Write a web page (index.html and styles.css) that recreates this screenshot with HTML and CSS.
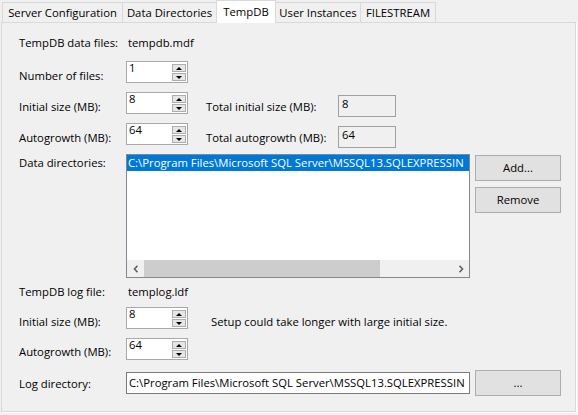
FILE: index.html
```html
<!DOCTYPE html>
<html>
<head>
<meta charset="utf-8">
<link rel="stylesheet" href="styles.css">
</head>
<body>
<div class="tabs">
  <div class="tab t1">Server Configuration</div>
  <div class="tab t2">Data Directories</div>
  <div class="tab t3 active">TempDB</div>
  <div class="tab t4">User Instances</div>
  <div class="tab t5">FILESTREAM</div>
</div>
<div class="panel">
  <div class="info first"><span class="lbl">TempDB data files:</span><span class="value">tempdb.mdf</span></div>

  <div class="row r2">
    <span class="lbl pad">Number of files:</span>
    <div class="spin"><span class="val">1</span><div class="btns"><span class="up"></span><span class="dn"></span></div></div>
  </div>

  <div class="row r3">
    <span class="lbl pad">Initial size (MB):</span>
    <div class="spin"><span class="val">8</span><div class="btns"><span class="up"></span><span class="dn"></span></div></div>
    <span class="lbl2 pad">Total initial size (MB):</span>
    <div class="total">8</div>
  </div>

  <div class="row r3">
    <span class="lbl pad">Autogrowth (MB):</span>
    <div class="spin"><span class="val">64</span><div class="btns"><span class="up"></span><span class="dn"></span></div></div>
    <span class="lbl2 pad">Total autogrowth (MB):</span>
    <div class="total">64</div>
  </div>

  <div class="listrow">
    <span class="lbl pad1">Data directories:</span>
    <div class="list">
      <div class="items">
        <div class="sel">C:\Program Files\Microsoft SQL Server\MSSQL13.SQLEXPRESSIN</div>
      </div>
      <div class="hscroll">
        <div class="arrow"><svg width="6" height="8" viewBox="0 0 6 8"><polyline points="4.5,0.8 1.5,4 4.5,7.2" fill="none" stroke="#606060" stroke-width="1.6"/></svg></div>
        <div class="thumb"></div>
        <div class="track"></div>
        <div class="arrow"><svg width="6" height="8" viewBox="0 0 6 8"><polyline points="1.5,0.8 4.5,4 1.5,7.2" fill="none" stroke="#606060" stroke-width="1.6"/></svg></div>
      </div>
    </div>
    <div class="side">
      <div class="btn add">Add...</div>
      <div class="btn remove">Remove</div>
    </div>
  </div>

  <div class="info log"><span class="lbl">TempDB log file:</span><span class="value">templog.ldf</span></div>

  <div class="row r7">
    <span class="lbl pad">Initial size (MB):</span>
    <div class="spin"><span class="val">8</span><div class="btns"><span class="up"></span><span class="dn"></span></div></div>
    <span class="note pad">Setup could take longer with large initial size.</span>
  </div>

  <div class="row r3">
    <span class="lbl pad6">Autogrowth (MB):</span>
    <div class="spin"><span class="val">64</span><div class="btns"><span class="up"></span><span class="dn"></span></div></div>
  </div>

  <div class="row r9">
    <span class="lbl pad6">Log directory:</span>
    <div class="input">C:\Program Files\Microsoft SQL Server\MSSQL13.SQLEXPRESSIN</div>
    <div class="btn browse">...</div>
  </div>
</div>
</body>
</html>
```

FILE: styles.css
```css
* { box-sizing: border-box; }

body {
  margin: 0;
  width: 578px;
  height: 415px;
  overflow: hidden;
  background: #f0f0f0;
  font-family: "Open Sans", "Noto Sans", sans-serif;
  font-size: 11.3px;
  color: #000;
}

.tabs {
  display: flex;
  align-items: flex-end;
  height: 22px;
  padding-left: 2px;
}

.tab {
  height: 20px;
  line-height: 20px;
  text-align: center;
  white-space: nowrap;
  background: #f0f0f0;
  border: 1px solid #d9d9d9;
  border-bottom: none;
  border-left: none;
}

.t1 { width: 121px; border-left: 1px solid #d9d9d9; }
.t2 { width: 94px; }
.t3 { width: 60px; }
.t4 { width: 85px; }
.t5 { width: 75px; }

.tab.active {
  height: 23px;
  line-height: 21px;
  margin-left: -1px;
  margin-bottom: -1px;
  background: #fff;
  border-left: 1px solid #d9d9d9;
  position: relative;
  z-index: 1;
}

.panel {
  margin-left: 1px;
  width: 575px;
  height: 390px;
  border: 1px solid #d9d9d9;
  box-shadow: 1px 1px 0 #fff;
  padding: 0 0 0 17px;
}

.info {
  display: flex;
  height: 16px;
  line-height: 16px;
}
.info.first { margin-top: 12px; }
.info.log { margin-top: 6px; }
.value { padding-left: 2px; }

.lbl {
  width: 107px;
  flex: none;
  line-height: 16px;
  white-space: nowrap;
}
.pad { padding-top: 7px; }
.pad6 { padding-top: 6px; }
.pad1 { padding-top: 1px; }

.row {
  display: flex;
  align-items: flex-start;
  height: 22px;
}
.r2 { margin-top: 10px; }
.r3 { margin-top: 9px; }
.r7 { margin-top: 7px; }
.r9 { margin-top: 10px; height: 26px; }

.spin {
  display: flex;
  width: 62px;
  height: 22px;
  flex: none;
  background: #fff;
  border: 1px solid #a9a9a9;
}
.spin .val {
  flex: 1;
  padding-left: 2px;
  line-height: 12px;
}
.btns {
  display: flex;
  flex-direction: column;
  gap: 1px;
  width: 14px;
  margin: 2px 1px 1px 0;
}
.btns span {
  flex: 1;
  display: flex;
  align-items: center;
  justify-content: center;
  background: #e6e6e6;
  border: 1px solid #adadad;
}
.up::before {
  content: "";
  border-left: 3px solid transparent;
  border-right: 3px solid transparent;
  border-bottom: 3px solid #000;
}
.dn::before {
  content: "";
  border-left: 3px solid transparent;
  border-right: 3px solid transparent;
  border-top: 3px solid #000;
}

.lbl2 {
  width: 132px;
  margin-left: 18px;
  line-height: 16px;
  white-space: nowrap;
}
.total {
  width: 58px;
  height: 22px;
  margin-top: 3px;
  border: 1px solid #a0a0a0;
  background: #f0f0f0;
  padding-left: 3px;
  line-height: 16px;
}

.note {
  margin-left: 23px;
  line-height: 16px;
  white-space: nowrap;
}

.listrow {
  display: flex;
  align-items: flex-start;
  margin-top: 9px;
  height: 124px;
}
.list {
  width: 344px;
  height: 124px;
  flex: none;
  display: flex;
  flex-direction: column;
  background: #fff;
  border: 1px solid #828790;
}
.items {
  flex: 1;
  overflow: hidden;
}
.sel {
  height: 16px;
  line-height: 16px;
  padding-left: 1px;
  overflow: hidden;
  white-space: nowrap;
  background: #0078d7;
  color: #fff;
}
.hscroll {
  display: flex;
  height: 17px;
  background: #f0f0f0;
}
.arrow {
  width: 17px;
  display: flex;
  align-items: center;
  justify-content: center;
}
.thumb {
  width: 236px;
  background: #cdcdcd;
}
.track { flex: 1; }

.side {
  display: flex;
  flex-direction: column;
  margin-left: 5px;
}
.btn {
  width: 86px;
  height: 26px;
  line-height: 24px;
  text-align: center;
  background: #e1e1e1;
  border: 1px solid #adadad;
}
.add { margin-top: 1px; }
.remove { margin-top: 6px; }

.input {
  width: 344px;
  height: 22px;
  margin-top: 2px;
  flex: none;
  overflow: hidden;
  white-space: nowrap;
  background: #fff;
  border: 1px solid #7a7a7a;
  padding-left: 2px;
  line-height: 20px;
}
.browse { margin-left: 5px; }
```
